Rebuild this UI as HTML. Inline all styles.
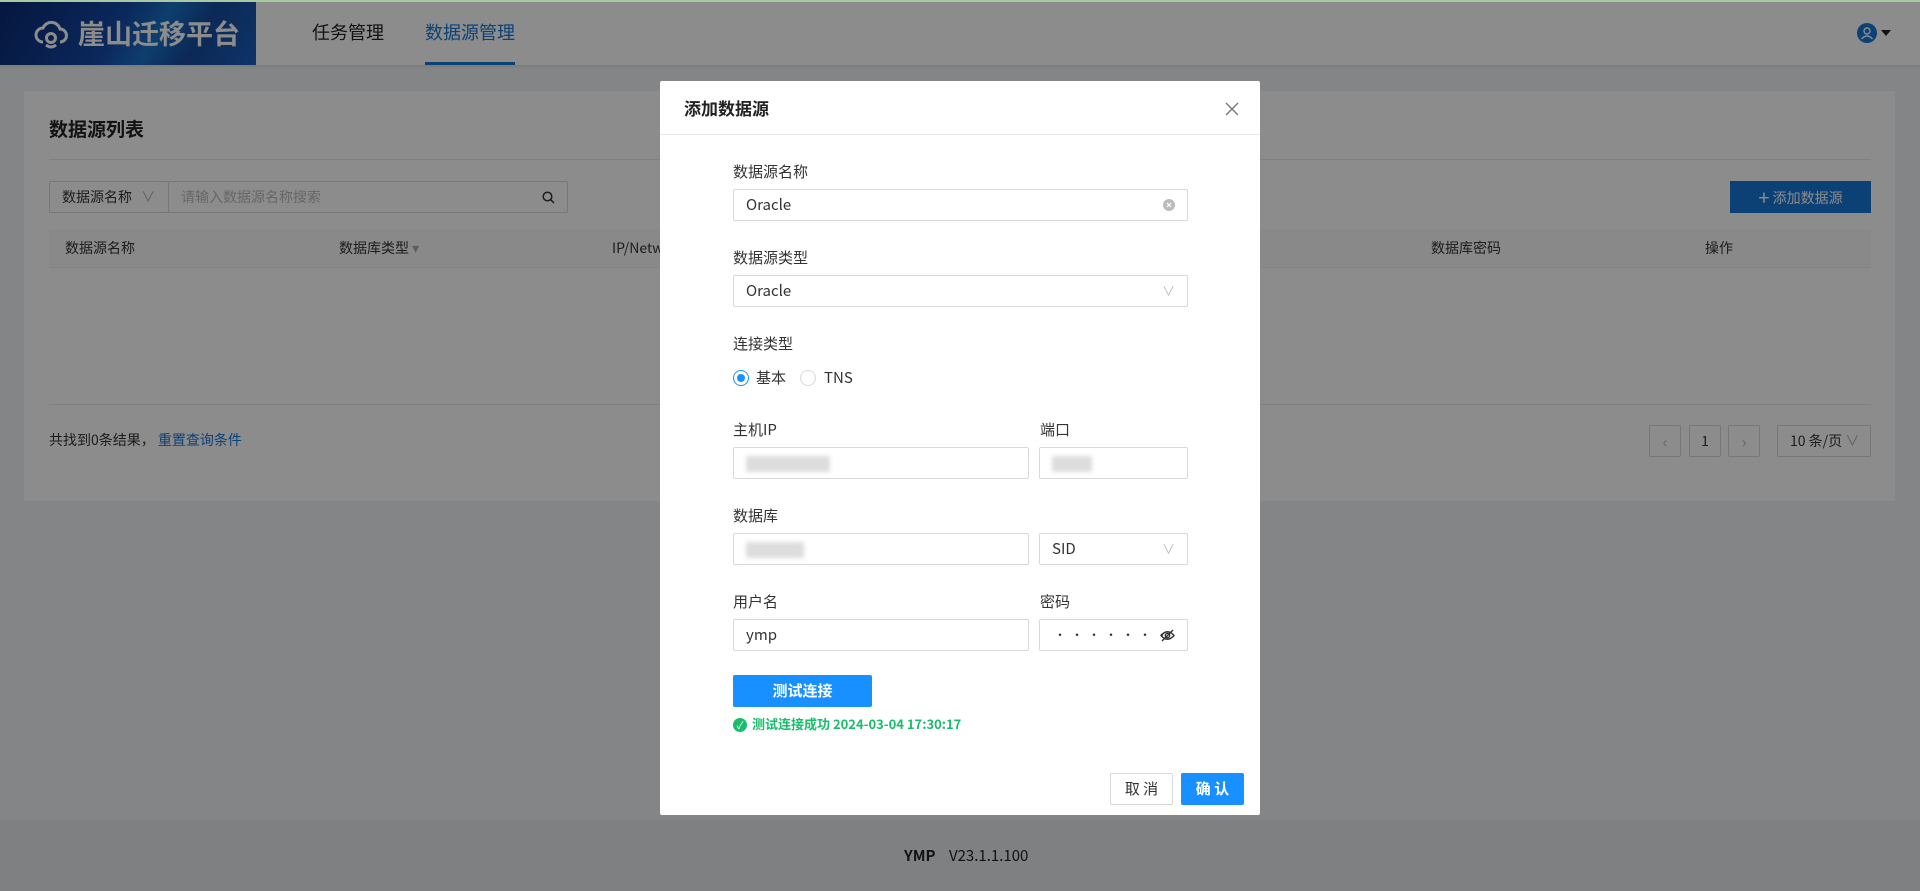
<!DOCTYPE html>
<html><head><meta charset="utf-8"><style>
*{box-sizing:border-box;margin:0;padding:0}
body{width:1920px;height:891px;overflow:hidden;background:#f0f2f5;font-family:"Noto Sans CJK SC","Liberation Sans",sans-serif;color:#333;position:relative;line-height:1.4}
.abs{position:absolute}
.hdr{left:0;top:0;width:1920px;height:65px;background:#fff;box-shadow:0 1px 4px rgba(0,0,0,.1)}
.logo{left:0;top:0;width:256px;height:65px;background:linear-gradient(120deg,#0a2a70 0%,#1448a8 45%,#1a72c8 60%,#164a9c 75%,#1b5fbf 100%);color:#fff;font-size:27px;font-weight:bold;display:flex;align-items:center;padding-left:34px;gap:10px}
.nav{top:0;height:65px;line-height:65px;font-size:18px;color:#222}
.card{left:24px;top:91px;width:1871px;height:410px;background:#fff}
.inp{border:1px solid #d9d9d9;background:#fff;border-radius:2px}
.th{top:229px;height:39px;line-height:39px;font-size:14px;color:#333}
.ov{left:0;top:0;width:1920px;height:891px;background:rgba(0,0,0,.45)}
.modal{left:660px;top:81px;width:600px;height:734px;background:#fff;border-radius:2px}
.lbl{font-size:15px;color:#333;position:absolute;line-height:22px}
.fi{position:absolute;border:1px solid #d9d9d9;border-radius:2px;height:32px;font-size:15px;line-height:30px;padding-left:12px;color:#333;background:#fff}
.blur{position:absolute;background:#ddd;filter:blur(2px)}
</style></head><body>
<div class="abs hdr"></div>
<div class="abs logo"><svg width="34" height="34" viewBox="0 0 34 34" fill="none" stroke="#fff" stroke-width="3"><path d="M9 26a7 7 0 0 1 0-14a9 9 0 0 1 17 1a6.5 6.5 0 0 1 0 13"/><circle cx="17" cy="22" r="4.5"/><path d="M12 29q5 4 10 0"/></svg><span>崖山迁移平台</span></div>
<div class="abs nav" style="left:312px">任务管理</div>
<div class="abs nav" style="left:425px;color:#1677d8">数据源管理</div>
<div class="abs" style="left:425px;top:62px;width:90px;height:3px;background:#1677d8"></div>
<svg class="abs" style="left:1857px;top:23px" width="20" height="20" viewBox="0 0 20 20"><circle cx="10" cy="10" r="10" fill="#1677d8"/><circle cx="10" cy="8" r="3" fill="none" stroke="#fff" stroke-width="1.4"/><path d="M4.5 16q5.5-6 11 0" fill="none" stroke="#fff" stroke-width="1.4"/></svg>
<div class="abs" style="left:1881px;top:30px;border:5px solid transparent;border-top:6px solid #222"></div>

<div class="abs card"></div>
<div class="abs" style="left:49px;top:116px;font-size:19px;font-weight:bold;color:#222">数据源列表</div>
<div class="abs" style="left:49px;top:159px;width:1822px;height:1px;background:#e8e8e8"></div>
<div class="abs inp" style="left:49px;top:181px;width:120px;height:32px;font-size:14px;line-height:30px;padding-left:12px">数据源名称 <span style="color:#aaa;margin-left:6px">∨</span></div>
<div class="abs inp" style="left:168px;top:181px;width:400px;height:32px;font-size:14px;line-height:30px;padding-left:12px;color:#bbb">请输入数据源名称搜索<svg style="position:absolute;right:12px;top:9px" width="13" height="13" viewBox="0 0 13 13" fill="none" stroke="#333" stroke-width="1.5"><circle cx="5.5" cy="5.5" r="4.3"/><path d="M8.7 8.7L12 12"/></svg></div>
<div class="abs" style="left:1730px;top:181px;width:141px;height:32px;background:#1677d8;color:#fff;font-size:14px;line-height:32px;text-align:center"><b style="font-size:20px;font-weight:normal;vertical-align:-2px">+</b> 添加数据源</div>
<div class="abs" style="left:49px;top:229px;width:1822px;height:39px;background:#fafafa;border-bottom:1px solid #eee"></div>
<div class="abs th" style="left:65px">数据源名称</div>
<div class="abs th" style="left:339px">数据库类型 <span style="color:#aaa">▾</span></div>
<div class="abs th" style="left:612px">IP/Network</div>
<div class="abs th" style="left:1431px">数据库密码</div>
<div class="abs th" style="left:1705px">操作</div>
<div class="abs" style="left:49px;top:404px;width:1822px;height:1px;background:#e8e8e8"></div>
<div class="abs" style="left:49px;top:431px;font-size:14px">共找到0条结果， <span style="color:#1677d8">重置查询条件</span></div>
<div class="abs inp" style="left:1649px;top:425px;width:32px;height:32px;text-align:center;line-height:30px;color:#bbb">‹</div>
<div class="abs inp" style="left:1689px;top:425px;width:32px;height:32px;text-align:center;line-height:30px;font-size:14px">1</div>
<div class="abs inp" style="left:1728px;top:425px;width:32px;height:32px;text-align:center;line-height:30px;color:#bbb">›</div>
<div class="abs inp" style="left:1777px;top:425px;width:94px;height:32px;line-height:30px;font-size:14px;padding-left:12px">10 条/页 <span style="color:#aaa">∨</span></div>
<div class="abs" style="left:0;top:820px;width:1920px;height:71px;background:#e8e9eb"></div>
<div class="abs" style="left:904px;top:845px;font-size:15px;color:#222"><b>YMP</b>&nbsp;&nbsp;&nbsp; V23.1.1.100</div>

<div class="abs ov"></div>
<div class="abs" style="left:0;top:0;width:1920px;height:2px;background:#a9c9a3"></div>

<div class="abs modal">
 <div class="abs" style="left:24px;top:15px;font-size:17px;font-weight:bold;color:#222;line-height:24px">添加数据源</div>
 <svg class="abs" style="left:564px;top:20px" width="16" height="16" viewBox="0 0 16 16" stroke="#777" stroke-width="1.4"><path d="M2 2L14 14M14 2L2 14"/></svg>
 <div class="abs" style="left:0;top:53px;width:600px;height:1px;background:#e8e8e8"></div>
 <div class="lbl" style="left:73px;top:80px">数据源名称</div>
 <div class="fi" style="left:73px;top:108px;width:455px">Oracle<svg style="position:absolute;right:12px;top:9px" width="12" height="12" viewBox="0 0 12 12"><circle cx="6" cy="6" r="6" fill="#bbb"/><path d="M4 4L8 8M8 4L4 8" stroke="#fff" stroke-width="1.2"/></svg></div>
 <div class="lbl" style="left:73px;top:166px">数据源类型</div>
 <div class="fi" style="left:73px;top:194px;width:455px">Oracle<span style="position:absolute;right:12px;color:#bbb;font-size:13px">∨</span></div>
 <div class="lbl" style="left:73px;top:252px">连接类型</div>
 <div class="abs" style="left:73px;top:289px;width:16px;height:16px;border:1px solid #1890ff;border-radius:50%"><div style="margin:3px;width:8px;height:8px;border-radius:50%;background:#1890ff"></div></div>
 <div class="lbl" style="left:96px;top:286px">基本</div>
 <div class="abs" style="left:140px;top:289px;width:16px;height:16px;border:1px solid #d9d9d9;border-radius:50%"></div>
 <div class="lbl" style="left:164px;top:286px">TNS</div>
 <div class="lbl" style="left:73px;top:338px">主机IP</div>
 <div class="lbl" style="left:380px;top:338px">端口</div>
 <div class="fi" style="left:73px;top:366px;width:296px"></div>
 <div class="blur" style="left:86px;top:375px;width:84px;height:16px"></div>
 <div class="fi" style="left:379px;top:366px;width:149px"></div>
 <div class="blur" style="left:392px;top:375px;width:40px;height:16px"></div>
 <div class="lbl" style="left:73px;top:424px">数据库</div>
 <div class="fi" style="left:73px;top:452px;width:296px"></div>
 <div class="blur" style="left:86px;top:461px;width:58px;height:16px"></div>
 <div class="fi" style="left:379px;top:452px;width:149px">SID<span style="position:absolute;right:12px;color:#bbb;font-size:13px">∨</span></div>
 <div class="lbl" style="left:73px;top:510px">用户名</div>
 <div class="lbl" style="left:380px;top:510px">密码</div>
 <div class="fi" style="left:73px;top:538px;width:296px">ymp</div>
 <div class="fi" style="left:379px;top:538px;width:149px;letter-spacing:5px;font-size:12px;padding-left:14px">•••••••<svg style="position:absolute;right:12px;top:9px" width="15" height="13" viewBox="0 0 15 13" fill="none" stroke="#333" stroke-width="1.4"><path d="M1 6.5Q7.5-1 14 6.5Q7.5 14 1 6.5Z"/><circle cx="7.5" cy="6.5" r="2.2"/><path d="M2 12L13 1"/></svg></div>
 <div class="abs" style="left:73px;top:594px;width:139px;height:32px;background:#1890ff;color:#fff;font-size:15px;font-weight:bold;text-align:center;line-height:32px;border-radius:2px">测试连接</div>
 <div class="abs" style="left:73px;top:637px;width:14px;height:14px;border-radius:50%;background:#19be6b;color:#fff;font-size:10px;text-align:center;line-height:14px">✓</div>
 <div class="abs" style="left:92px;top:634px;font-size:13px;font-weight:bold;color:#19be6b">测试连接成功 2024-03-04 17:30:17</div>
 <div class="abs" style="left:450px;top:692px;width:63px;height:32px;border:1px solid #d9d9d9;font-size:15px;text-align:center;line-height:30px;border-radius:2px">取 消</div>
 <div class="abs" style="left:521px;top:692px;width:63px;height:32px;background:#1890ff;color:#fff;font-size:15px;font-weight:bold;text-align:center;line-height:32px;border-radius:2px">确 认</div>
</div>
</body></html>
